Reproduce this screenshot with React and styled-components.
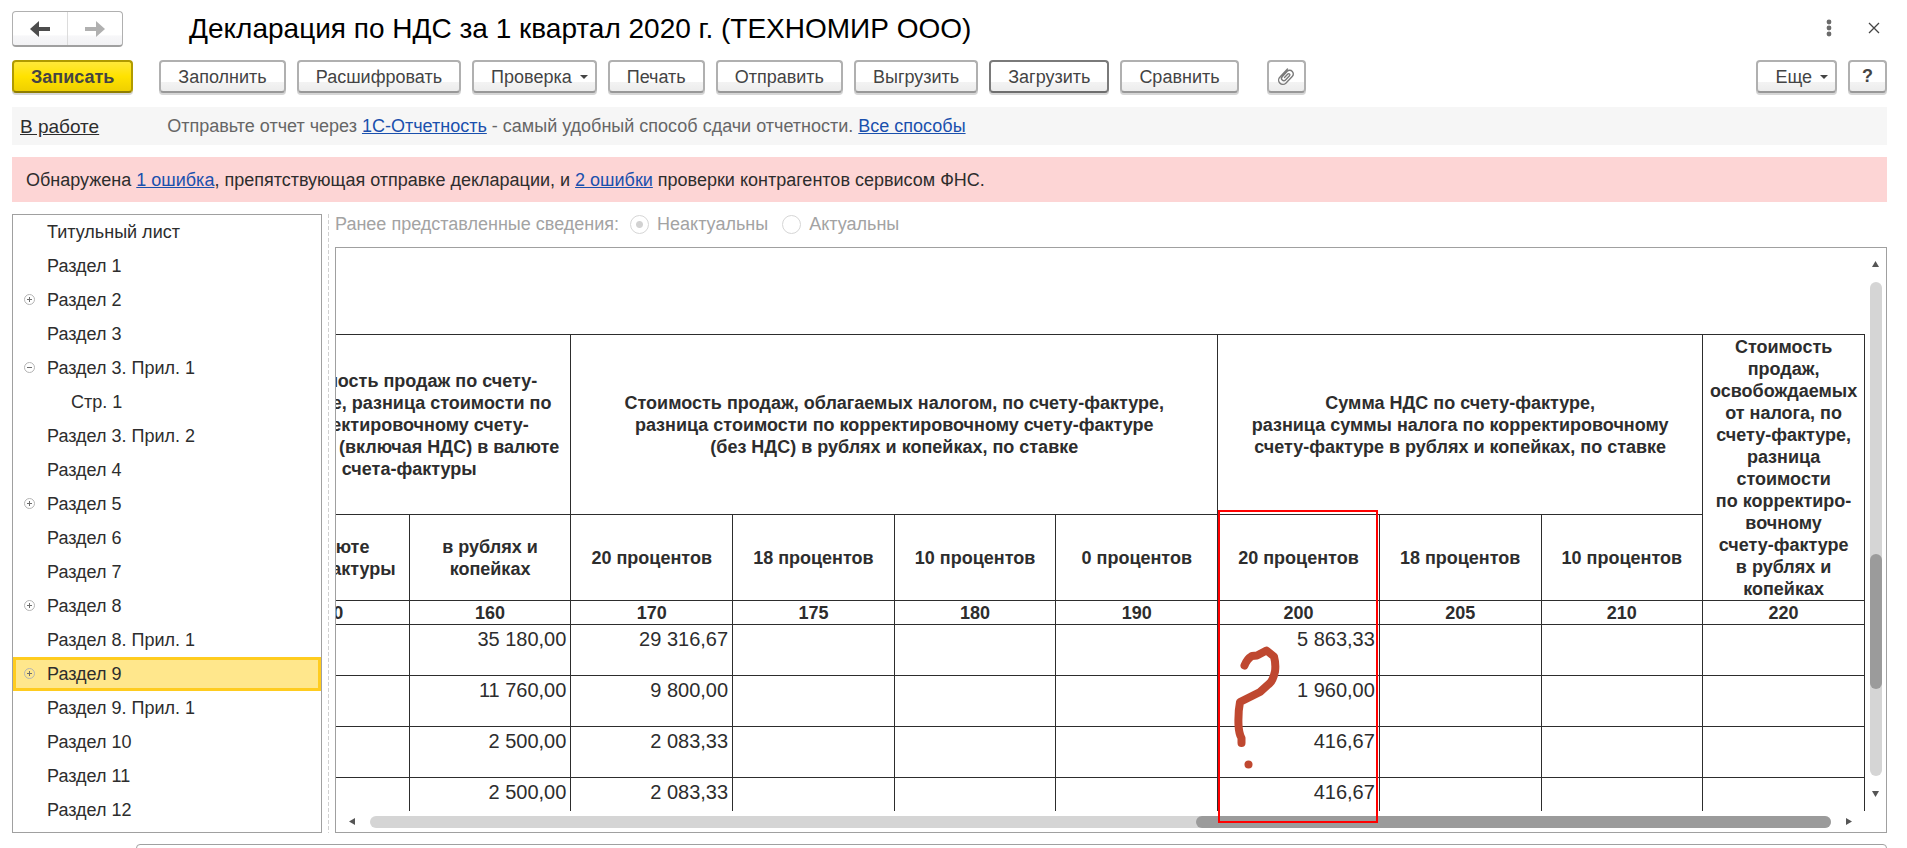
import React from 'react'
import styled, { createGlobalStyle } from 'styled-components'

const GlobalStyle = createGlobalStyle`
    * {
        box-sizing: border-box;
    }
    body {
        margin: 0;
        background: #ffffff;
        color: #2d2d2d;
        font-family: "Liberation Sans", Arial, sans-serif;
        font-size: 18px;
    }
    button, input, textarea {
        font: inherit;
    }
`

const Page = styled.div`
    display: flex;
    flex-direction: column;
    height: 100vh;
    overflow: hidden;
    padding: 11px 20px 0 12px;

    & > * {
        flex-shrink: 0;
    }
`

const Header = styled.header`
    display: flex;
    align-items: center;
    gap: 19px;
    height: 36px;
`

const History = styled.div`
    display: flex;
    width: 111px;
    height: 36px;
    border: 1px solid #b0b0b0;
    border-bottom: 2px solid #a0a0a0;
    border-radius: 4px;
    background: linear-gradient(to bottom, #ffffff 70%, #f7f7f9 72%, #f2f2f4 100%);
`

const HistoryButton = styled.button`
    flex: 1;
    display: flex;
    align-items: center;
    justify-content: center;
    padding: 0;
    border: 0;
    background: none;
    color: ${props => props.disabled ? '#b0b0b0' : '#4d4d4d'};

    & + & {
        border-left: 1px solid #dcdcdc;
    }
`

const Title = styled.h1`
    flex: 1;
    margin: 0 0 0 47px;
    color: #000000;
    font-size: 28px;
    font-weight: normal;
`

const IconButton = styled.button`
    display: flex;
    align-items: center;
    justify-content: center;
    width: 26px;
    height: 32px;
    padding: 0;
    border: 0;
    background: none;
    color: #6b6b6b;
`

const Toolbar = styled.div`
    display: flex;
    gap: 11px;
    margin-top: 13px;
`

const Button = styled.button`
    display: flex;
    align-items: center;
    justify-content: center;
    gap: 8px;
    height: 33px;
    padding: 1px ${props => props.$menu ? '7px' : '17px'} 0 17px;
    border: 2px solid ${props => props.$active ? '#7a7a7a' : '#b0b0b0'};
    border-bottom-color: ${props => props.$active ? '#6e6e6e' : '#989898'};
    border-radius: 4px;
    box-shadow: 0 2px 0 #d6d6d6;
    background: linear-gradient(to bottom, #ffffff 68%, #f3f3f3 70%, #ececec 100%);
    color: #444444;
    white-space: nowrap;
`

const PrimaryButton = styled(Button)`
    margin-right: 15px;
    border-color: #b09a00;
    border-bottom-color: #8f7d00;
    background: linear-gradient(to bottom, #ffe83a, #ffe200 50%, #efd000);
    font-weight: bold;
`

const SquareButton = styled(Button)`
    width: 39px;
    padding: 0;
    margin-left: ${props => props.$apart ? '17px' : '0'};
    font-weight: ${props => props.$bold ? 'bold' : 'normal'};
`

const Spacer = styled.div`
    flex: 1;
`

const Caret = styled.span`
    border: 4px solid transparent;
    border-top-color: #444444;
    border-bottom: 0;
`

const InfoBar = styled.div`
    display: flex;
    align-items: center;
    gap: 68px;
    height: 38px;
    margin-top: 14px;
    padding: 1px 0 0 8px;
    background: #f6f6f6;
    color: #666666;
`

const Link = styled.a`
    color: ${props => props.$dark ? '#2d2d2d' : '#1a50ad'};
    font-size: ${props => props.$dark ? '19px' : '18px'};
`

const ErrorBar = styled.div`
    height: 45px;
    margin-top: 12px;
    padding-left: 14px;
    background: #fdd5d5;
    line-height: 46px;
`

const Main = styled.main`
    display: flex;
    margin-top: 12px;
`

const Tree = styled.ul`
    width: 310px;
    height: 619px;
    margin: 0;
    padding: 0;
    border: 1px solid #a0a0a0;
    list-style: none;
`

const TreeItem = styled.li`
    display: flex;
    align-items: center;
    height: 34px;
    padding-left: ${props => 11 - (props.$selected ? 3 : 0) + (props.$level ? 24 : 0)}px;
    border: ${props => props.$selected ? '3px solid #ffcc1f' : '0'};
    background: ${props => props.$selected ? '#ffe78c' : 'none'};
`

const Toggle = styled.button`
    display: flex;
    width: 23px;
    padding: 0;
    border: 0;
    background: none;
`

const Splitter = styled.div`
    width: 13px;
    padding-left: 6px;

    &::before {
        content: "";
        display: block;
        width: 1px;
        height: 100%;
        background: repeating-linear-gradient(to bottom, #d0d0d0 0 4px, transparent 4px 6px);
    }
`

const Content = styled.section`
    flex: 1;
    min-width: 0;
`

const RadioRow = styled.fieldset`
    display: flex;
    align-items: center;
    height: 21px;
    margin: 0 0 12px;
    padding: 0;
    border: 0;
    color: #a3a3a3;
`

const RadioLabel = styled.label`
    display: flex;
    align-items: center;
    gap: 8px;
    margin: 0 3px 0 11px;
`

const Radio = styled.input`
    appearance: none;
    width: 19px;
    height: 19px;
    margin: 0;
    border: 1px solid #d6d6d6;
    border-radius: 50%;
    background: #ffffff;

    &:checked {
        background: radial-gradient(circle, #d2d2d2 3px, #ffffff 4px);
    }
`

const Sheet = styled.div`
    position: relative;
    display: grid;
    grid-template-columns: minmax(0, 1fr) 21px;
    grid-template-rows: 563px 21px;
    border: 1px solid #a0a0a0;
`

const Viewport = styled.div`
    display: flex;
    justify-content: flex-end;
    align-items: flex-start;
    overflow: hidden;
    padding-top: 86px;
`

const Table = styled.table`
    flex: none;
    width: 1618px;
    border-collapse: collapse;
    table-layout: fixed;
`

const HeadCell = styled.th`
    height: ${props => props.$height}px;
    padding: 0;
    border: 1px solid #2d2d2d;
    line-height: 22px;
    white-space: pre;
`

const Cell = styled.td`
    height: 51px;
    padding: 2px 4px;
    border: 1px solid #2d2d2d;
    font-size: 20px;
    line-height: 24px;
    text-align: right;
    vertical-align: top;
`

const ScrollBar = styled.div`
    display: flex;
    flex-direction: ${props => props.$vertical ? 'column' : 'row'};
    align-items: center;
    gap: 14px;
    padding: ${props => props.$vertical ? '13px 0 14px' : '0 13px'};
`

const Track = styled.div`
    display: flex;
    flex-direction: inherit;
    justify-content: flex-end;
    flex: 1;
    width: 12px;
    height: 12px;
    padding-bottom: ${props => props.$vertical ? '87px' : '0'};
    border-radius: 6px;
    background: #d5d5d5;
`

const Thumb = styled.div`
    flex: 0 0 ${props => props.$size};
    border-radius: 6px;
    background: #9b9b9b;
`

const Highlight = styled.div`
    position: absolute;
    top: 262px;
    right: 508px;
    width: 160px;
    height: 313px;
    border: 2px solid #ff0000;
`

const Mark = styled.svg`
    position: absolute;
    left: 14px;
    top: 132px;
`

const Comment = styled.textarea`
    height: 60px;
    margin: 11px 0 0 124px;
    border: 1px solid #a0a0a0;
    border-radius: 4px;
    resize: none;
`

const sections = [
    { name: 'Титульный лист' },
    { name: 'Раздел 1' },
    { name: 'Раздел 2', toggle: 'plus' },
    { name: 'Раздел 3' },
    { name: 'Раздел 3. Прил. 1', toggle: 'minus' },
    { name: 'Стр. 1', level: 1 },
    { name: 'Раздел 3. Прил. 2' },
    { name: 'Раздел 4' },
    { name: 'Раздел 5', toggle: 'plus' },
    { name: 'Раздел 6' },
    { name: 'Раздел 7' },
    { name: 'Раздел 8', toggle: 'plus' },
    { name: 'Раздел 8. Прил. 1' },
    { name: 'Раздел 9', toggle: 'plus', selected: true },
    { name: 'Раздел 9. Прил. 1' },
    { name: 'Раздел 10' },
    { name: 'Раздел 11' },
    { name: 'Раздел 12' },
]

const codes = ['150', '160', '170', '175', '180', '190', '200', '205', '210', '220']

const rates = ['20 процентов', '18 процентов', '10 процентов', '0 процентов', '20 процентов', '18 процентов', '10 процентов']

const rows = [
    { 160: '35 180,00', 170: '29 316,67', 200: '5 863,33' },
    { 160: '11 760,00', 170: '9 800,00', 200: '1 960,00' },
    { 160: '2 500,00', 170: '2 083,33', 200: '416,67' },
    { 160: '2 500,00', 170: '2 083,33', 200: '416,67' },
]

const Arrow = ({ flip }) => (
    <svg width="22" height="18" viewBox="0 0 22 18" fill="currentColor">
        <path d={flip ? 'M21 9 L12 1 V7 H1 V11 H12 V17 Z' : 'M1 9 L10 1 V7 H21 V11 H10 V17 Z'} />
    </svg>
)

const ToggleIcon = ({ type }) => (
    <svg width="11" height="12" viewBox="0 0 11 12" fill="none">
        <circle cx="5.5" cy="5.5" r="5" stroke="#b4b4b4" />
        <path d={type === 'plus' ? 'M3 5.5 H8 M5.5 3 V8' : 'M3 5.5 H8'} stroke="#6e6e6e" />
    </svg>
)

const paths = {
    up: 'M3.5 0 L7 6 H0 Z',
    down: 'M0 1 H7 L3.5 7 Z',
    left: 'M6 0 V7 L0 3.5 Z',
    right: 'M1 0 L7 3.5 L1 7 Z',
}

const ScrollArrow = ({ to }) => (
    <svg width="7" height="7" viewBox="0 0 7 7" fill="#555555">
        <path d={paths[to]} />
    </svg>
)

const SectionTree = () => (
    <Tree>
        {sections.map(section => (
            <TreeItem key={section.name} $selected={section.selected} $level={section.level}>
                <Toggle tabIndex={section.toggle ? 0 : -1}>
                    {section.toggle && <ToggleIcon type={section.toggle} />}
                </Toggle>
                {section.name}
            </TreeItem>
        ))}
    </Tree>
)

const SalesTable = () => (
    <Table>
        <colgroup>
            {codes.map(code => <col key={code} />)}
        </colgroup>
        <thead>
            <tr>
                <HeadCell colSpan={2} $height={180}>{'Стоимость продаж по счету-\nфактуре, разница стоимости по\nкорректировочному счету-\nфактуре (включая НДС) в валюте\nсчета-фактуры'}</HeadCell>
                <HeadCell colSpan={4}>{'Стоимость продаж, облагаемых налогом, по счету-фактуре,\nразница стоимости по корректировочному счету-фактуре\n(без НДС) в рублях и копейках, по ставке'}</HeadCell>
                <HeadCell colSpan={3}>{'Сумма НДС по счету-фактуре,\nразница суммы налога по корректировочному\nсчету-фактуре в рублях и копейках, по ставке'}</HeadCell>
                <HeadCell rowSpan={2}>{'Стоимость\nпродаж,\nосвобождаемых\nот налога, по\nсчету-фактуре,\nразница\nстоимости\nпо корректиро-\nвочному\nсчету-фактуре\nв рублях и\nкопейках'}</HeadCell>
            </tr>
            <tr>
                <HeadCell $height={86}>{'в валюте\nсчета-фактуры'}</HeadCell>
                <HeadCell>{'в рублях и\nкопейках'}</HeadCell>
                {rates.map((rate, i) => <HeadCell key={i}>{rate}</HeadCell>)}
            </tr>
            <tr>
                {codes.map(code => <HeadCell key={code} $height={24}>{code}</HeadCell>)}
            </tr>
        </thead>
        <tbody>
            {rows.map((row, i) => (
                <tr key={i}>
                    {codes.map(code => <Cell key={code}>{row[code]}</Cell>)}
                </tr>
            ))}
        </tbody>
    </Table>
)

const App = () => {
    return (
        <Page>
            <GlobalStyle />
            <Header>
                <History>
                    <HistoryButton aria-label="Назад"><Arrow /></HistoryButton>
                    <HistoryButton aria-label="Вперед" disabled><Arrow flip /></HistoryButton>
                </History>
                <Title>Декларация по НДС за 1 квартал 2020 г. (ТЕХНОМИР ООО)</Title>
                <IconButton aria-label="Меню">
                    <svg width="6" height="20" viewBox="0 0 6 20" fill="currentColor">
                        <circle cx="3" cy="3" r="2.4" />
                        <circle cx="3" cy="9" r="2.4" />
                        <circle cx="3" cy="15" r="2.4" />
                    </svg>
                </IconButton>
                <IconButton aria-label="Закрыть">
                    <svg width="12" height="14" viewBox="0 0 12 14" stroke="#444444" strokeWidth="1.3">
                        <path d="M1 1 L11 11 M11 1 L1 11" />
                    </svg>
                </IconButton>
            </Header>

            <Toolbar>
                <PrimaryButton>Записать</PrimaryButton>
                <Button>Заполнить</Button>
                <Button>Расшифровать</Button>
                <Button $menu>Проверка <Caret /></Button>
                <Button>Печать</Button>
                <Button>Отправить</Button>
                <Button>Выгрузить</Button>
                <Button $active>Загрузить</Button>
                <Button>Сравнить</Button>
                <SquareButton $apart aria-label="Вложения">
                    <svg width="18" height="18" viewBox="0 0 18 18" fill="none" stroke="#7a7a7a" strokeWidth="1.4" strokeLinecap="round">
                        <path d="M10.500 1 L3 9 a4.200 4.200 0 0 0 5.800 6.200 L15.200 8.500 a3.600 3.600 0 0 0 -5 -5.200 L5.200 8.800 a2.300 2.300 0 0 0 3.300 3.300 L12.500 7.800 a1.200 1.200 0 0 0 -1.700 -1.700 L7.500 9.600" />
                    </svg>
                </SquareButton>
                <Spacer />
                <Button $menu>Еще <Caret /></Button>
                <SquareButton $bold>?</SquareButton>
            </Toolbar>

            <InfoBar>
                <Link href="#status" $dark>В работе</Link>
                <span>
                    Отправьте отчет через <Link href="#report">1С-Отчетность</Link> - самый удобный способ сдачи отчетности. <Link href="#ways">Все способы</Link>
                </span>
            </InfoBar>

            <ErrorBar>
                Обнаружена <Link href="#error">1 ошибка</Link>, препятствующая отправке декларации, и <Link href="#errors">2 ошибки</Link> проверки контрагентов сервисом ФНС.
            </ErrorBar>

            <Main>
                <SectionTree />
                <Splitter />
                <Content>
                    <RadioRow>
                        Ранее представленные сведения:
                        <RadioLabel>
                            <Radio type="radio" name="actual" defaultChecked disabled />
                            Неактуальны
                        </RadioLabel>
                        <RadioLabel>
                            <Radio type="radio" name="actual" disabled />
                            Актуальны
                        </RadioLabel>
                    </RadioRow>
                    <Sheet>
                        <Viewport>
                            <SalesTable />
                        </Viewport>
                        <ScrollBar $vertical>
                            <ScrollArrow to="up" />
                            <Track $vertical><Thumb $size="135px" /></Track>
                            <ScrollArrow to="down" />
                        </ScrollBar>
                        <ScrollBar>
                            <ScrollArrow to="left" />
                            <Track><Thumb $size="635px" /></Track>
                            <ScrollArrow to="right" />
                        </ScrollBar>
                        <Highlight>
                            <Mark width="50" height="130" viewBox="0 0 50 130" fill="none" stroke="#bf4830" strokeWidth="8" strokeLinecap="round" strokeLinejoin="round">
                                <path d="M10.500 21.500 Q13 15 18 12 L23 11.500 L32.500 6.500 L40 12.500 Q42 20 41 27.500 Q39 36 36 39 L26 48 L6 58 Q4 68 4.500 81 Q5 90 7.500 94 V99" />
                                <path d="M14.500 120.500 V120.600" />
                            </Mark>
                        </Highlight>
                    </Sheet>
                </Content>
            </Main>

            <Comment aria-label="Комментарий" />
        </Page>
    )
}

export default App
